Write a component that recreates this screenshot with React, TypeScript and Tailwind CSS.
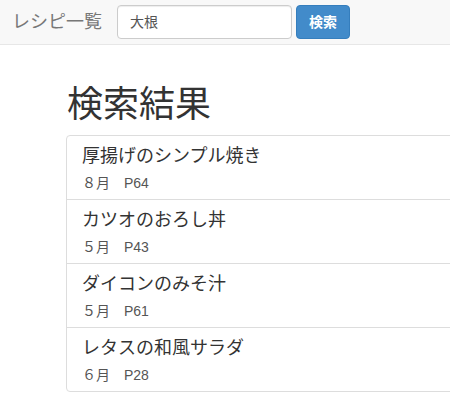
import React from "react";

const items = [
  { title: "厚揚げのシンプル焼き", month: "８月", page: "P64" },
  { title: "カツオのおろし丼", month: "５月", page: "P43" },
  { title: "ダイコンのみそ汁", month: "５月", page: "P61" },
  { title: "レタスの和風サラダ", month: "６月", page: "P28" },
];

export default function App() {
  return (
    <div
      className="w-[450px] h-[396px] overflow-hidden bg-white text-[#333]"
      style={{ fontFamily: '"Liberation Sans", "Noto Sans CJK JP", sans-serif' }}
    >
      <div className="h-[45px] bg-[#f8f8f8] border-b border-[#e7e7e7] flex items-center">
        <span className="ml-[12px] text-[18px] text-[#777] leading-[20px]">レシピ一覧</span>
        <div className="ml-[15px] w-[175px] h-[34px] border border-[#ccc] rounded-[4px] bg-white flex items-center px-[12px] text-[14px] text-[#555] shadow-[inset_0_1px_1px_rgba(0,0,0,0.075)]">
          大根
        </div>
        <button className="ml-[4px] w-[54px] h-[34px] rounded-[4px] bg-[#428bca] border border-[#357ebd] text-white text-[14px] font-bold">
          検索
        </button>
      </div>
      <div className="ml-[66px] mt-[40px]">
        <h1 className="text-[36px] leading-[40px] font-normal text-[#333] ml-[1px]">検索結果</h1>
        <div className="mt-[10px] w-[420px] border border-[#ddd] rounded-[4px]">
          {items.map((it, i) => (
            <div
              key={i}
              className={`px-[15px] pt-[8px] pb-[6px] ${i > 0 ? "border-t border-[#ddd]" : ""}`}
            >
              <div className="text-[18px] leading-[24px] text-[#333]">{it.title}</div>
              <div className="mt-[5px] text-[14px] leading-[20px] text-[#555]">
                {it.month}
                <span className="ml-[14px]">{it.page}</span>
              </div>
            </div>
          ))}
        </div>
      </div>
    </div>
  );
}
